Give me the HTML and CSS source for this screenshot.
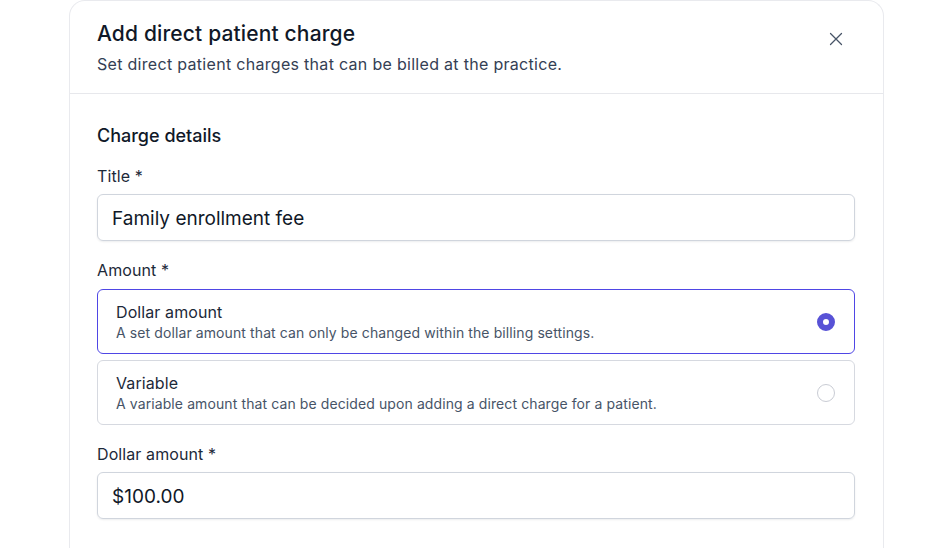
FILE: index.html
```html
<!DOCTYPE html>
<html>
<head>
<meta charset="utf-8">
<link rel="stylesheet" href="styles.css">
</head>
<body>
<div class="modal">
  <div class="header">
    <div class="header-text">
      <h1 class="title">Add direct patient charge</h1>
      <p class="subtitle">Set direct patient charges that can be billed at the practice.</p>
    </div>
    <button class="close" aria-label="Close">
      <svg width="14" height="14" viewBox="0 0 14 14" fill="none"><path d="M1.5 1.5L12.5 12.5M12.5 1.5L1.5 12.5" stroke="#475467" stroke-width="1.25" stroke-linecap="round"/></svg>
    </button>
  </div>
  <div class="body">
    <h2 class="section">Charge details</h2>
    <div class="field">
      <label class="label">Title *</label>
      <div class="input">Family enrollment fee</div>
    </div>
    <div class="field">
      <label class="label label-options">Amount *</label>
      <div class="options">
        <div class="option selected">
          <div class="option-text">
            <div class="option-title">Dollar amount</div>
            <div class="option-desc">A set dollar amount that can only be changed within the billing settings.</div>
          </div>
          <span class="radio checked"></span>
        </div>
        <div class="option">
          <div class="option-text">
            <div class="option-title">Variable</div>
            <div class="option-desc">A variable amount that can be decided upon adding a direct charge for a patient.</div>
          </div>
          <span class="radio"></span>
        </div>
      </div>
    </div>
    <div class="field">
      <label class="label">Dollar amount *</label>
      <div class="input">$100.00</div>
    </div>
  </div>
</div>
</body>
</html>
```

FILE: styles.css
```css
* { box-sizing: border-box; }
html, body { margin: 0; padding: 0; background: #ffffff; }
body {
  font-family: Inter, "Noto Sans", sans-serif;
  color: #101828;
  height: 548px;
  overflow: hidden;
}
.modal {
  margin-left: 69px;
  width: 815px;
  min-height: 600px;
  border: 1px solid #e9eaee;
  border-bottom: none;
  border-radius: 16px 16px 0 0;
  background: #fff;
}
.header {
  display: flex;
  justify-content: space-between;
  align-items: flex-start;
  padding: 19px 40px 17px 27px;
  border-bottom: 1px solid #e7e8ec;
}
.title {
  margin: 0;
  font-size: 21px;
  font-weight: 500;
  line-height: 28px;
  letter-spacing: 0.15px;
  color: #101828;
}
.subtitle {
  margin: 4px 0 0;
  font-size: 16px;
  line-height: 24px;
  letter-spacing: 0.3px;
  color: #344054;
}
.close {
  border: none;
  background: none;
  padding: 0;
  margin-top: 12px;
  width: 14px;
  height: 14px;
  display: flex;
}
.body {
  padding: 29px 27px 0 27px;
}
.section {
  margin: 0 0 15px;
  font-size: 18px;
  font-weight: 500;
  line-height: 26px;
  color: #101828;
}
.field { margin-bottom: 17px; }
.label {
  display: block;
  font-size: 16px;
  line-height: 24px;
  letter-spacing: 0.1px;
  color: #1d2939;
  margin-bottom: 6px;
}
.label-options { margin-bottom: 7px; }
.input {
  width: 758px;
  height: 47px;
  border: 1px solid #d0d5dd;
  border-radius: 6px;
  box-shadow: 0 1px 2px rgba(16, 24, 40, 0.08);
  padding: 2px 14px 0;
  display: flex;
  align-items: center;
  font-size: 19px;
  color: #101828;
}
.options {
  display: flex;
  flex-direction: column;
  gap: 6px;
  width: 758px;
}
.option {
  height: 65px;
  border: 1px solid #d6d9e0;
  border-radius: 6px;
  display: flex;
  align-items: center;
  justify-content: space-between;
  padding: 0 19px 0 18px;
}
.option.selected { border-color: #4f46e5; }
.option-title {
  font-size: 16px;
  line-height: 22px;
  letter-spacing: 0.1px;
  color: #1d2939;
}
.option-desc {
  font-size: 14px;
  line-height: 20px;
  letter-spacing: 0.1px;
  color: #475467;
}
.radio {
  width: 18px;
  height: 18px;
  border-radius: 50%;
  border: 1px solid #c9ccd4;
  background: #fff;
  flex: none;
}
.radio.checked {
  border: 6px solid #5852d6;
  background: #fff;
}
```
